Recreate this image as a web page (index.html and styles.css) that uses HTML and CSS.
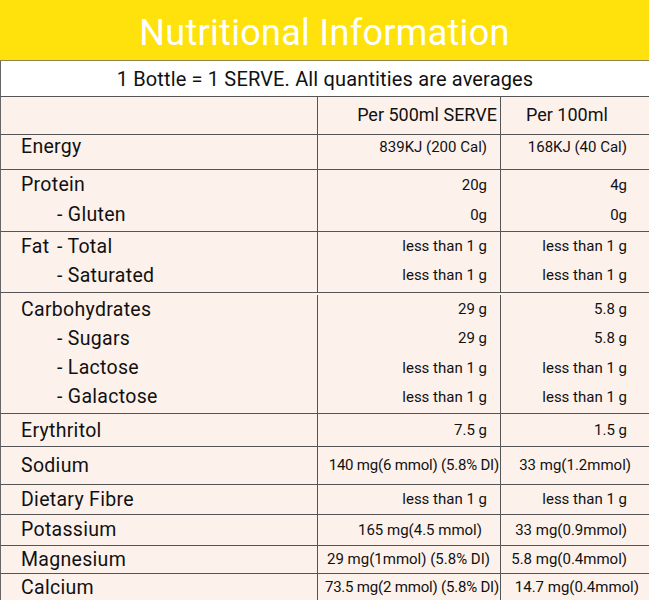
FILE: index.html
```html
<!DOCTYPE html>
<html lang="en">
<head>
<meta charset="utf-8">
<title>Nutritional Information</title>
<link rel="stylesheet" href="styles.css">
</head>
<body>
<div class="panel">
  <div class="title">Nutritional Information</div>
  <div class="subtitle">1 Bottle = 1 SERVE. All quantities are averages</div>

  <div class="grp g-head">
    <div class="lab"></div>
    <div class="mid"><div class="ln hd">Per 500ml SERVE</div></div>
    <div class="rt"><div class="ln hd hl">Per 100ml</div></div>
  </div>

  <div class="grp g-energy">
    <div class="lab"><div class="ln">Energy</div></div>
    <div class="mid"><div class="ln">839KJ (200 Cal)</div></div>
    <div class="rt"><div class="ln">168KJ (40 Cal)</div></div>
  </div>

  <div class="grp g-protein">
    <div class="lab"><div class="ln">Protein</div><div class="ln sub">- Gluten</div></div>
    <div class="mid"><div class="ln">20g</div><div class="ln">0g</div></div>
    <div class="rt"><div class="ln">4g</div><div class="ln">0g</div></div>
  </div>

  <div class="grp g-fat">
    <div class="lab"><div class="ln"><span class="fat">Fat</span>- Total</div><div class="ln sub">- Saturated</div></div>
    <div class="mid"><div class="ln">less than 1 g</div><div class="ln">less than 1 g</div></div>
    <div class="rt"><div class="ln">less than 1 g</div><div class="ln">less than 1 g</div></div>
  </div>

  <div class="grp g-carb">
    <div class="lab">
      <div class="ln">Carbohydrates</div>
      <div class="ln sub">- Sugars</div>
      <div class="ln sub">- Lactose</div>
      <div class="ln sub">- Galactose</div>
    </div>
    <div class="mid">
      <div class="ln">29 g</div>
      <div class="ln">29 g</div>
      <div class="ln low">less than 1 g</div>
      <div class="ln low">less than 1 g</div>
    </div>
    <div class="rt">
      <div class="ln">5.8 g</div>
      <div class="ln">5.8 g</div>
      <div class="ln low">less than 1 g</div>
      <div class="ln low">less than 1 g</div>
    </div>
  </div>

  <div class="grp g-ery">
    <div class="lab"><div class="ln">Erythritol</div></div>
    <div class="mid"><div class="ln">7.5 g</div></div>
    <div class="rt"><div class="ln">1.5 g</div></div>
  </div>

  <div class="grp g-sod">
    <div class="lab"><div class="ln">Sodium</div></div>
    <div class="mid"><div class="ln wide">140 mg(6 mmol) (5.8% DI)</div></div>
    <div class="rt"><div class="ln r18">33 mg(1.2mmol)</div></div>
  </div>

  <div class="grp g-fib">
    <div class="lab"><div class="ln">Dietary Fibre</div></div>
    <div class="mid"><div class="ln">less than 1 g</div></div>
    <div class="rt"><div class="ln">less than 1 g</div></div>
  </div>

  <div class="grp g-pot">
    <div class="lab"><div class="ln">Potassium</div></div>
    <div class="mid"><div class="ln r18">165 mg(4.5 mmol)</div></div>
    <div class="rt"><div class="ln">33 mg(0.9mmol)</div></div>
  </div>

  <div class="grp g-mag">
    <div class="lab"><div class="ln">Magnesium</div></div>
    <div class="mid"><div class="ln r10">29 mg(1mmol) (5.8% DI)</div></div>
    <div class="rt"><div class="ln">5.8 mg(0.4mmol)</div></div>
  </div>

  <div class="grp g-cal">
    <div class="lab"><div class="ln">Calcium</div></div>
    <div class="mid"><div class="ln wide">73.5 mg(2 mmol) (5.8% DI)</div></div>
    <div class="rt"><div class="ln r10">14.7 mg(0.4mmol)</div></div>
  </div>
</div>
</body>
</html>
```

FILE: styles.css
```css
html, body {
  margin: 0;
  padding: 0;
  background: #fdf1ec;
}

.panel {
  width: 649px;
  height: 600px;
  overflow: hidden;
  font-family: Roboto, "Liberation Sans", sans-serif;
  color: #111111;
  background: #fdf1ec;
}

.title {
  height: 60px;
  background: #ffe10c;
  border-bottom: 1px solid #8e8550;
  color: #ffffff;
  font-size: 36px;
  line-height: 67px;
  text-align: center;
  letter-spacing: 0.3px;
}

.subtitle {
  height: 35px;
  background: #ffffff;
  border-left: 1px solid #666;
  border-bottom: 1px solid #555;
  font-size: 20px;
  line-height: 36px;
  text-align: center;
  letter-spacing: 0.15px;
}

.grp {
  display: flex;
  border-left: 1px solid #666;
  border-bottom: 1px solid #555;
  box-sizing: border-box;
}

.lab {
  width: 316px;
  flex: none;
  font-size: 19.5px;
  letter-spacing: 0.3px;
}

.mid {
  width: 182px;
  flex: none;
  border-left: 1px solid #555;
  font-size: 15px;
  text-align: right;
}

.rt {
  flex: 1;
  border-left: 1px solid #555;
  font-size: 15px;
  text-align: right;
}

.lab .ln { padding-left: 20px; }
.lab .sub { padding-left: 56px; }
.mid .ln { padding-right: 13px; }
.rt .ln { padding-right: 22px; }

.fat {
  display: inline-block;
  width: 36px;
}

.ln {
  white-space: nowrap;
}

/* header row */
.g-head { height: 38px; }
.g-head .ln { line-height: 36px; font-size: 18px; }
.mid .hd { padding-right: 3px; }
.rt .hl { text-align: left; padding-left: 25px; padding-right: 0; }

.g-energy { height: 35px; }
.g-energy .ln { line-height: 24px; }

.g-protein { height: 62px; }
.g-protein .ln { line-height: 30px; }

.g-fat { height: 61px; }
.g-fat .ln { line-height: 29px; }

.g-carb { height: 121px; padding-top: 2px; }
.g-carb .ln { line-height: 29px; }
.g-carb .low { position: relative; top: 1px; }

.g-ery { height: 33px; }
.g-ery .ln { line-height: 33px; }

.g-sod { height: 38px; }
.g-sod .ln { line-height: 37px; }

.g-fib { height: 30px; }
.g-fib .ln { line-height: 29px; }

.g-pot { height: 31px; }
.g-pot .ln { line-height: 30px; }

.g-mag { height: 28px; }
.g-mag .ln { line-height: 27px; }

.g-cal { height: 28px; border-bottom: none; }
.g-cal .ln { line-height: 27px; }

.mid .wide { padding-right: 1px; letter-spacing: -0.2px; }
.mid .r18 { padding-right: 18px; }
.mid .r10 { padding-right: 10px; }
.rt .r18 { padding-right: 18px; }
.rt .r10 { padding-right: 10px; }
```
